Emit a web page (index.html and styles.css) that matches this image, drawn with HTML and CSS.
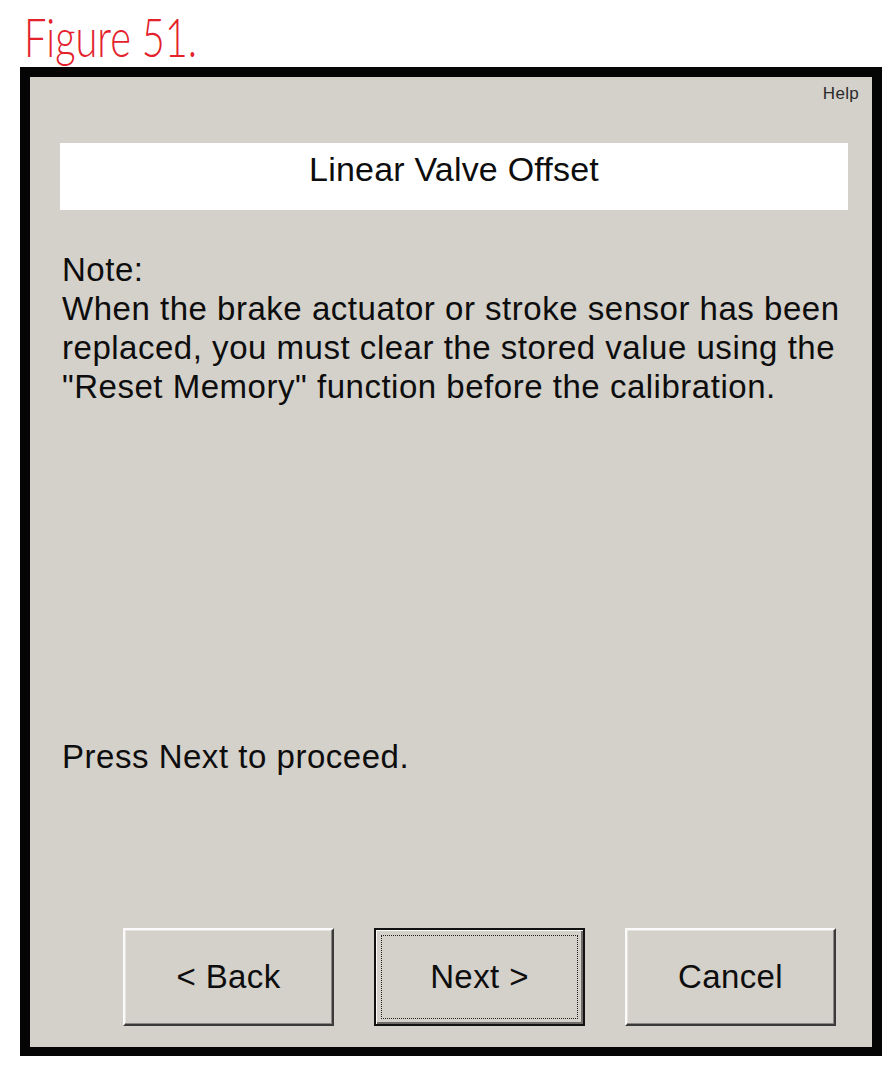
FILE: index.html
```html
<!DOCTYPE html>
<html lang="en">
<head>
  <meta charset="UTF-8" />
  <title>Figure 51 | Linear Valve Offset</title>
  <link rel="stylesheet" href="styles.css">
</head>
<body>
  <p class="caption"><span>Figure 51.</span></p>

  <div class="window">
    <div class="help-row">
      <span class="help">Help</span>
    </div>

    <h1 class="title">Linear Valve Offset</h1>

    <p class="note">
      Note:<br>
      When the brake actuator or stroke sensor has been<br>
      replaced, you must clear the stored value using the<br>
      "Reset Memory" function before the calibration.
    </p>

    <p class="proceed">Press Next to proceed.</p>

    <!-- Boutons du bas -->
    <div class="buttons">
      <button class="btn">&lt; Back</button>
      <button class="btn default"><span class="focus">Next &gt;</span></button>
      <button class="btn">Cancel</button>
    </div>
  </div>
</body>
</html>
```

FILE: styles.css
```css
* {
  margin: 0;
  padding: 0;
  box-sizing: border-box;
}

body {
  background: #fff;
  font-family: 'Liberation Sans', Arial, sans-serif;
  color: #0d0d0d;
}

/* Legende rouge en haut */
.caption {
  height: 67px;
  padding: 12px 0 0 24px;
  font-family: 'Lato', 'DejaVu Sans', sans-serif;
  font-weight: 300;
  font-size: 53px;
  line-height: 50px;
  color: #e3222b;
}

.caption span {
  display: inline-block;
  transform: scaleX(0.75);
  transform-origin: left center;
}

/* Fenetre de dialogue */
.window {
  width: 862px;
  height: 989px;
  margin-left: 20px;
  border: 10px solid #050505;
  border-bottom-width: 9px;
  background: #d4d0ca;
  padding: 7px 24px 21px 30px;
  display: flex;
  flex-direction: column;
}

.help-row {
  display: flex;
  justify-content: flex-end;
  margin-right: -11px;
  height: 20px;
}

.help {
  font-size: 17px;
  line-height: 20px;
  letter-spacing: 0.3px;
  color: #2a2a2a;
}

.title {
  margin-top: 39px;
  height: 67px;
  padding: 6px 0 21px;
  background: #fff;
  text-align: center;
  font-weight: normal;
  font-size: 34px;
  line-height: 40px;
  letter-spacing: 0.2px;
}

.note,
.proceed {
  padding-left: 2px;
  font-size: 33px;
  line-height: 39px;
  letter-spacing: 0.52px;
}

.note {
  margin-top: 40px;
}

.proceed {
  margin-top: 331px;
}

.buttons {
  display: flex;
  gap: 40px;
  margin-top: 152px;
  margin-left: 63px;
}

.btn {
  width: 211px;
  height: 98px;
  background: #d4d0ca;
  border: 2px solid;
  border-color: #fafafa #3a3a3a #3a3a3a #fafafa;
  box-shadow: inset -1px -1px #8a8784, inset 1px 1px #e6e3de;
  font-family: 'Liberation Sans', Arial, sans-serif;
  font-size: 33px;
  letter-spacing: 0.4px;
  color: #0d0d0d;
  cursor: pointer;
}

.btn.default {
  border: 2px solid #111;
  box-shadow: inset 1px 1px #fafafa, inset -2px -2px #6f6c69;
  padding: 5px;
}

.btn .focus {
  display: flex;
  height: 100%;
  justify-content: center;
  align-items: center;
  border: 1px dotted #222;
}
```
